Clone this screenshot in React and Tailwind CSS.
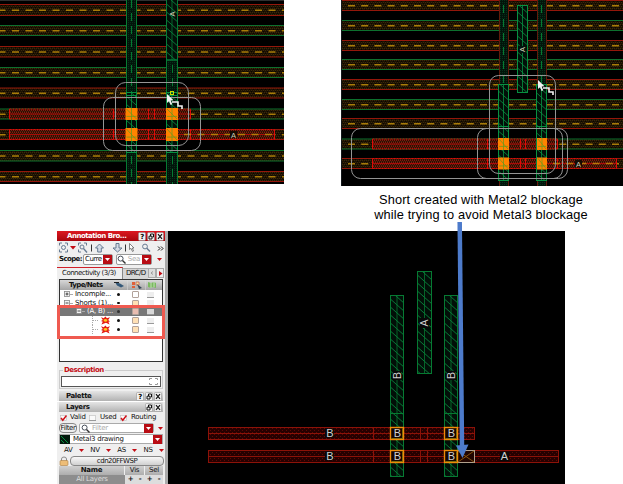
import React from "react";

const GREEN = "#067a32";
const RED = "#8c1208";

function Defs() {
  return (
    <svg className="absolute h-0 w-0">
      <defs>
        <pattern id="brown" width="4" height="4" patternUnits="userSpaceOnUse">
          <rect width="4" height="4" fill="#1c1203" />
          <path d="M0 0h1v1h-1zM2 0h1v1h-1zM1 2h1v1h-1zM3 2h1v1h-1z" fill="#3b2808" />
          <path d="M1 1h1v1h-1zM3 3h1v1h-1z" fill="#0a0600" />
        </pattern>
        <pattern id="red" width="4" height="4" patternUnits="userSpaceOnUse">
          <rect width="4" height="4" fill="#2a1004" />
          <path d="M0 0h1v1h-1zM2 0h1v1h-1zM1 2h1v1h-1zM3 2h1v1h-1z" fill="#8a160b" />
          <path d="M1 1h1v1h-1zM3 1h1v1h-1zM0 3h1v1h-1zM2 3h1v1h-1z" fill="#55200a" />
        </pattern>
        <pattern id="darkred" width="4" height="4" patternUnits="userSpaceOnUse">
          <rect width="4" height="4" fill="#260000" />
          <rect width="1" height="1" fill="#5c0a04" />
          <rect x="2" y="2" width="1" height="1" fill="#5c0a04" />
        </pattern>
        <pattern id="green" width="2" height="2" patternUnits="userSpaceOnUse">
          <rect width="2" height="2" fill="#02140a" />
          <rect width="1" height="1" fill="#06301a" />
        </pattern>
        <pattern id="hatch" width="9" height="8" patternUnits="userSpaceOnUse">
          <path d="M-9 -8L18 16M-9 0L9 16M0 -8L18 8" stroke="#079041" strokeWidth="0.8" />
        </pattern>
      </defs>
    </svg>
  );
}

function Tracks({ rows, x, width, dash, offset }) {
  return rows.map(([top, bottom, color], i) => (
    <g key={i}>
      <rect x={x} y={top} width={width} height={bottom - top} fill="url(#brown)" />
      <path d={`M${x} ${top}H${x + width}M${x} ${bottom}H${x + width}`} stroke={color === "r" ? "#94170b" : "#0d702e"} />
      <path
        d={`M${x} ${(top + bottom) / 2 + 0.2}H${x + width}`}
        stroke="#a87c08"
        strokeWidth="1.5"
        strokeDasharray={dash}
        strokeDashoffset={offset}
      />
    </g>
  ));
}

function Wire({ x1, x2, y1, y2, ticks }) {
  return (
    <g stroke="#dd0c08">
      <rect x={x1} y={y1} width={x2 - x1} height={y2 - y1} fill="url(#red)" stroke="none" />
      <path d={`M${x1} ${y1}H${x2}M${x1} ${y2}H${x2}`} strokeDasharray="2 1" />
      <path d={`M${x1} ${(y1 + y2) / 2}H${x2}`} stroke="#a80c08" />
      <path d={`M${x1} ${y1}V${y2}M${x2} ${y1}V${y2}` + ticks.map((t) => `M${t} ${y1}V${y2}`).join("")} />
    </g>
  );
}

function Hatched({ x, y, w, h, color = "#079041" }) {
  return (
    <g stroke={color}>
      <rect x={x} y={y} width={w} height={h} fill="#020f08" />
      <rect x={x} y={y} width={w} height={h} fill="url(#hatch)" />
      <path d={`M${x + w / 2} ${y}v${h}`} strokeWidth="0.8" />
    </g>
  );
}

function Via({ x, y, w = 12, h = 12 }) {
  return (
    <g>
      <rect x={x} y={y} width={w} height={h} fill="#ff8400" />
      <path d={`M${x + 1} ${y + 1}l${w - 2} ${h - 2}M${x + w / 2} ${y}v${h}M${x + 1} ${y + h * 0.7}h${w - 2}`} stroke="#5c9b20" strokeWidth="0.7" fill="none" />
    </g>
  );
}

function Cursor({ x, y }) {
  return (
    <g transform={`translate(${x} ${y})`}>
      <path d="M0 0L0 9L2 7.2L3.6 11L5.2 10.2L3.7 6.6L6.5 6.3Z" fill="#f2f2f2" />
      <path d="M5 8H11V12H15V15" stroke="#f2f2f2" strokeWidth="1.6" fill="none" />
    </g>
  );
}

function Letter({ x, y, size = 7.5, rotate = 0, fill = "#cfcab4", children }) {
  return (
    <g transform={`translate(${x} ${y}) rotate(${rotate})`}>
      <text className="font-['Liberation_Sans',sans-serif]" textAnchor="middle" y={size * 0.36} fontSize={size} fill={fill}>
        {children}
      </text>
    </g>
  );
}

const leftRows = [
  [4.5, 15.5, "r"], [25.5, 35.5, "g"], [46.5, 57, "r"], [67.5, 77.5, "g"], [88, 98, "r"],
  [109, 119, "g"], [129.5, 139.5, "r"], [150.5, 161, "g"], [171.5, 181.5, "r"],
];

function LeftLayout() {
  return (
    <svg width="284" height="184" className="block shrink-0 bg-black">
      <path d="M0 0.5H284" stroke="#303030" />
      <Tracks rows={leftRows} x={0} width={284} dash="7 6.5" offset="1.5" />
      <Wire x1={9.5} x2={190.5} y1={109} y2={119} ticks={[113.5, 148.5, 154.5]} />
      <Wire x1={9.5} x2={274.5} y1={129.5} y2={139.5} ticks={[113.5, 148.5, 154.5, 190.5]} />
      <path d="M184 134.5H275" stroke="#b87a08" strokeWidth="1.4" strokeDasharray="7 6.5" />
      <g stroke={GREEN}>
        <rect x="126.5" y="-1" width="10" height="186" fill="url(#green)" />
        <path d="M131.5 0V184" strokeDasharray="8 5" />
        <rect x="166.5" y="-1" width="11" height="186" fill="url(#green)" />
        <path d="M172.5 0V184" strokeDasharray="8 5" />
      </g>
      <Hatched x={166.5} y={-1} w={11} h={61} color="#067a38" />
      <Hatched x={126.5} y={92.5} w={10} h={60} />
      <Hatched x={166.5} y={92.5} w={11} h={60} />
      <path d="M126 95.5H137M166 95.5H178" stroke="#079041" />
      <Via x={125.5} y={108} />
      <Via x={125.5} y={128} h={13} />
      <Via x={166} y={108} />
      <Via x={166} y={128} h={13} />
      <g fill="none" stroke="#969696">
        <rect x="115.5" y="82.5" width="73" height="63" rx="10" />
        <rect x="103.5" y="97.5" width="97" height="53" rx="9" />
      </g>
      <Letter x={172} y={14} rotate={-90}>A</Letter>
      <rect x="230" y="131" width="7" height="7" fill="#160b02" />
      <Letter x={233.5} y={135}>A</Letter>
      <rect x="170.5" y="91.5" width="3" height="3" fill="none" stroke="#c8d800" />
      <Cursor x={167} y={94} />
    </svg>
  );
}

const rightRows = [
  [0.5, 10.5, "r"], [20.5, 30.5, "g"], [40.5, 50.5, "r"], [59.5, 69.5, "g"], [79.5, 89.5, "r"],
  [99.5, 109.5, "g"], [118.5, 128.5, "r"], [139, 149, "g"], [158.5, 168.5, "r"],
];

function RightLayout() {
  return (
    <svg width="282" height="186" viewBox="341 0 282 186" className="block shrink-0 bg-black">
      <Tracks rows={rightRows} x={341} width={282} dash="7 6.2" offset="6.2" />
      <Wire x1={372.5} x2={557.5} y1={139} y2={149} ticks={[487.5, 520.5, 525.5]} />
      <Wire x1={372.5} x2={616.5} y1={158.5} y2={168.5} ticks={[487.5, 520.5, 525.5, 557.5]} />
      <path d="M553 163.5H616" stroke="#b87a08" strokeWidth="1.4" strokeDasharray="7 6.2" />
      <g stroke="#611b0b">
        <rect x="499.5" y="-1" width="9" height="188" fill="url(#green)" />
        <rect x="537.5" y="-1" width="9" height="188" fill="url(#green)" />
      </g>
      <path d="M503.5 5V85M541.5 5V85" stroke={GREEN} strokeDasharray="8 6" />
      <Hatched x={517.5} y={5.5} w={10} h={87} />
      <Hatched x={498.5} y={84.5} w={10} h={96} />
      <Hatched x={536.5} y={84.5} w={10} h={96} />
      <path d="M498 126.5H509M536 126.5H547" stroke="#079041" />
      <Via x={498} y={138} w={11} />
      <Via x={498} y={157.5} w={11} />
      <Via x={537} y={138} w={10} />
      <Via x={537} y={157.5} w={10} />
      <g fill="none" stroke="#949494">
        <rect x="489.5" y="75.5" width="66" height="98" rx="9" />
        <rect x="351.5" y="128.5" width="211" height="50" rx="9" />
        <rect x="477.5" y="128.5" width="90" height="50" rx="9" />
      </g>
      <rect x="519" y="46" width="7" height="7" fill="#02120a" />
      <Letter x={522.5} y={49.5} rotate={-90}>A</Letter>
      <rect x="575" y="160" width="7" height="7" fill="#160b02" />
      <Letter x={578.5} y={164}>A</Letter>
      <Cursor x={538} y={80} />
      <path d="M341.5 0V186" stroke="#14181c" />
    </svg>
  );
}

function DarkWire({ x1, x2, y1, y2, ticks }) {
  return (
    <g stroke={RED}>
      <rect x={x1} y={y1} width={x2 - x1} height={y2 - y1} fill="url(#darkred)" />
      <path d={`M${x1} ${(y1 + y2) / 2}H${x2}` + ticks.map((t) => `M${t} ${y1}V${y2}`).join("")} />
    </g>
  );
}

function ResultLayout() {
  const vias = [[390.5, 427.5], [390.5, 450.5], [444.5, 427.5], [444.5, 450.5]];
  return (
    <svg width="397" height="253" viewBox="168 231 397 253" className="block shrink-0 bg-black">
      <DarkWire x1={208.5} x2={474.5} y1={427.5} y2={439.5} ticks={[373.5, 420.5, 427.5]} />
      <DarkWire x1={208.5} x2={558.5} y1={450.5} y2={462.5} ticks={[373.5, 420.5, 427.5]} />
      <Hatched x={417.5} y={271.5} w={14} h={102} color={GREEN} />
      <Hatched x={390.5} y={295.5} w={13} h={181} color={GREEN} />
      <Hatched x={444.5} y={295.5} w={13} h={181} color={GREEN} />
      <path d="M390 413.5H404M444 413.5H458" stroke={GREEN} />
      <rect x="457.5" y="450.5" width="17" height="12" fill="#200500" stroke="#b0a08c" />
      <path d="M458 451L474 462M458 462L474 451" stroke="#86510d" />
      {vias.map(([x, y]) => (
        <g key={x + y * 1000}>
          <rect x={x} y={y} width="13" height="12" fill="#160500" stroke="#f08a08" strokeWidth="1.4" />
          <path d={`M${x + 1} ${y + 11}H${x + 12}V${y + 1}`} fill="none" stroke="#b0a010" strokeWidth="0.6" />
          <Letter x={x + 6.8} y={y + 6} size={11} fill="#d0d0d0">B</Letter>
        </g>
      ))}
      <g fill="#080808">
        <rect x="420" y="318" width="9" height="10" />
        <rect x="393" y="371" width="8" height="9" />
        <rect x="447" y="371" width="8" height="9" />
        <rect x="325" y="428.5" width="9" height="9" />
        <rect x="325" y="451.5" width="9" height="9" />
        <rect x="500" y="452" width="9" height="9" />
      </g>
      <Letter x={424.5} y={323} size={10.5} rotate={-90} fill="#d0d0d0">A</Letter>
      <Letter x={397} y={375.5} size={10.5} rotate={-90} fill="#d0d0d0">B</Letter>
      <Letter x={451} y={375.5} size={10.5} rotate={-90} fill="#d0d0d0">B</Letter>
      <Letter x={330} y={433.5} size={11} fill="#d0d0d0">B</Letter>
      <Letter x={330} y={456.5} size={11} fill="#d0d0d0">B</Letter>
      <Letter x={504.5} y={456.5} size={11} fill="#d0d0d0">A</Letter>
    </svg>
  );
}

function Tri({ color = "#c40d15", right = false }) {
  return (
    <svg width="5" height="5" className="shrink-0">
      <path d={right ? "M1 0L4.5 2.5L1 5Z" : "M0 1H5L2.5 4Z"} fill={color} />
    </svg>
  );
}

function RedDrop() {
  return (
    <div className="flex h-[9px] w-[9px] shrink-0 items-center justify-center bg-[#b80c14]">
      <Tri color="#fff" />
    </div>
  );
}

function WinButtons({ help = true }) {
  return (
    <svg width="27" height="9" className="shrink-0">
      {help && (
        <g>
          <rect x="0.5" y="0.5" width="7" height="8" rx="1" fill="#f0f0f0" stroke="#888" strokeWidth="0.5" />
          <text x="4" y="7.2" fontSize="7" fontWeight="bold" textAnchor="middle" className="font-['DejaVu_Sans',sans-serif]">?</text>
        </g>
      )}
      <rect x="9.5" y="0.5" width="7" height="8" rx="1" fill="#f0f0f0" stroke="#888" strokeWidth="0.5" />
      <path d="M12.5 4V2H15.5V5H14.5M11 4.2H14V7H11Z" fill="none" stroke="#111" />
      <rect x="18.5" y="0.5" width="7" height="8" rx="1" fill="#f0f0f0" stroke="#888" strokeWidth="0.5" />
      <path d="M20 2.2L24 6.8M24 2.2L20 6.8" stroke="#111" strokeWidth="1.2" />
    </svg>
  );
}

function Search() {
  return (
    <svg width="9" height="9" className="shrink-0">
      <circle cx="3.6" cy="3.6" r="2.5" fill="none" stroke="#48505c" />
      <path d="M5.5 5.5L8.5 8.5" stroke="#333" strokeWidth="1.4" />
    </svg>
  );
}

function Toolbar() {
  return (
    <svg width="108" height="13" viewBox="57 239.5 108 13" className="block shrink-0" fill="none">
      <g stroke="#667a91">
        <path d="M59.5 244V241.5H62M65 241.5H67.5V244M67.5 248V250.5H65M62 250.5H59.5V248" />
        <circle cx="63.5" cy="246" r="2" />
        <path d="M78.5 244V241.5H81M84 241.5H86.5V244M81 250.5H78.5V248" />
        <circle cx="82" cy="245.5" r="2" />
        <path d="M83.5 247L87 251" strokeWidth="1.4" />
        <path d="M95.5 246.5L99.5 242.5L103.5 246.5H101.3V250.5H97.7V246.5Z" fill="#d5dce6" />
        <path d="M113 246.5L117.5 250.5L122 246.5H119V242H116V246.5Z" fill="#d5dce6" />
        <circle cx="145" cy="245" r="2.4" />
        <path d="M146.8 246.8L150 250" strokeWidth="1.4" />
      </g>
      <path d="M70 244.5H76L73 248Z" fill="#c40d15" />
      <path d="M91.5 243V250M125.5 243V250" stroke="#333" />
      <path d="M129.5 242V248L131 246.8L132.5 250L133.5 249.5L132.3 246.5H134Z" stroke="#666" strokeWidth="0.8" fill="#fff" />
      <path d="M158 245L160 247L158 249M161 245L163 247L161 249" stroke="#111" />
    </svg>
  );
}

function Star() {
  return (
    <svg width="9" height="9" viewBox="0 0 10 9" className="shrink-0">
      <path d="M0 1L3 2L5 0L6.5 2L10 1L8 4L10 5.5L8.2 6L9.5 9L5.5 7L0.5 9L2 6L0 5L2 4Z" fill="#e51b10" />
      <path d="M3 3.5L5 2.8L7 3.5V5.2L5 6L3 5.2Z" fill="#ffca20" />
    </svg>
  );
}

function Cells({ first = "bg-[#ffe0b5]", dark = false }) {
  return (
    <div className="ml-auto flex w-[45px] shrink-0 items-center">
      <span className={"mr-[12px] h-[2.5px] w-[2.5px] shrink-0 rounded-full " + (dark ? "bg-[#333]" : "bg-[#111]")} />
      <span className={"mr-[8px] h-[7px] w-[7px] shrink-0 rounded-[1px] border border-[#b2a29a] " + first} />
      <span className={"h-[6px] w-[7px] shrink-0 border-b border-[#999] " + (dark ? "bg-[#d7d7d7]" : "bg-[#eee]")} />
    </div>
  );
}

function Expander({ plus }) {
  return (
    <svg width="11" height="7" className="shrink-0">
      <rect x="0.5" y="0.5" width="5" height="5" fill="#f4f4f4" stroke="#888" strokeWidth="0.8" />
      <path d={plus ? "M1.5 3H4.5M3 1.5V4.5" : "M1.5 3H4.5"} stroke="#222" strokeWidth="0.8" />
      <path d="M6 3.5H9" stroke="#aaa" />
    </svg>
  );
}

function Tree() {
  return (
    <div className="mx-[2px] h-[83px] shrink-0 border border-[#333] bg-white">
      <div className="flex h-[10px] items-center bg-gradient-to-b from-[#d8d8d8] to-[#a5a5a5]">
        <span className="w-[51px] shrink-0 whitespace-nowrap pl-[9px] font-bold tracking-[-0.6px]">Type/Nets</span>
        <svg width="50" height="10" viewBox="110 280 50 10" className="shrink-0">
          <path d="M114 282L119 283.5L123 286L120 287.5L116 285.5Z" fill="#345878" />
          <path d="M113 282.5H118" stroke="#222" />
          <path d="M131 282h3v3h-3zM131 286h3v2h-3z" fill="#e06038" />
          <path d="M135 282h3v3h-3z" fill="#f8e0a0" stroke="#bf4434" strokeWidth="0.6" />
          <path d="M136 284L141 288L138 289Z" fill="#345" />
          <path d="M147 282L150 283L153 282L155 283V288L152 287L150 288L147 287Z" fill="#7ab960" />
          <path d="M150 283V288M153 282V287" stroke="#e5f4dc" strokeWidth="0.7" />
          <path d="M126.5 280V290M144.5 280V290" stroke="#ddd" strokeWidth="0.5" />
        </svg>
      </div>
      <div className="flex h-[9px] items-center pl-[4px]">
        <Expander plus />
        <span className="whitespace-nowrap">Incomple...</span>
        <Cells first="bg-white" />
      </div>
      <div className="flex h-[8px] items-center pl-[4px]">
        <Expander />
        <span className="whitespace-nowrap leading-[8px]">Shorts (1)...</span>
        <Cells />
      </div>
      <div className="flex h-[9px] items-center bg-[#777] pl-[16px] text-white">
        <Expander />
        <span className="whitespace-nowrap">(A, B) ...</span>
        <Cells first="bg-[#e9bdb0]" dark />
      </div>
      {[0, 1].map((i) => (
        <div key={i} className="flex h-[9px] items-center pl-[32px]">
          <span className="mr-[3px] h-[9px] w-[6px] shrink-0 border-l border-dotted border-[#aaa]">
            <span className="block h-[5px] border-b border-dotted border-[#aaa]" />
          </span>
          <Star />
          <Cells />
        </div>
      ))}
    </div>
  );
}

function Check({ on }) {
  return (
    <svg width="7" height="8" className="shrink-0">
      <rect x="0.5" y="1.5" width="6" height="5" fill="#fafafa" stroke="#bbb" strokeWidth="0.6" />
      {on ? <path d="M1 4L2.8 6.3L6.5 1.5" fill="none" stroke="#d01018" strokeWidth="1.5" /> : <path d="M0 6.5H7" stroke="#999" />}
    </svg>
  );
}

function SectionBar({ title, help }) {
  return (
    <div className="mx-[2px] flex h-[10px] shrink-0 items-center justify-between bg-gradient-to-b from-[#e5e5e5] to-[#b2b2b2] pl-[7px] font-bold tracking-[-0.4px]">
      <span>{title}</span>
      <WinButtons help={help} />
    </div>
  );
}

function Browser() {
  return (
    <div className="flex h-[253px] w-[111px] shrink-0 flex-col border-r-[3px] border-[#aaa] bg-[#efefef] font-['DejaVu_Sans',sans-serif] text-[7px] leading-[9px] tracking-[-0.25px] text-[#111]">
      <div className="flex h-[10px] shrink-0 items-center justify-between bg-gradient-to-b from-[#dc1820] to-[#a9060d] pl-[10px] font-bold tracking-[-0.5px] text-white">
        <span className="whitespace-nowrap">Annotation Bro...</span>
        <WinButtons />
      </div>
      <Toolbar />
      <div className="flex h-[11px] shrink-0 items-center pl-[2px]">
        <span className="w-[24px] shrink-0 font-bold tracking-[-0.6px]">Scope:</span>
        <div className="flex h-[11px] w-[30px] shrink-0 items-center justify-between rounded-[2px] border border-[#999] bg-white pl-px">
          <span className="tracking-[-0.5px]">Curre</span>
          <RedDrop />
        </div>
        <div className="ml-[3px] flex h-[11px] w-[36px] shrink-0 items-center justify-between rounded-[2px] border border-[#999] bg-white">
          <Search />
          <span className="text-[#aaa]">Sea</span>
          <RedDrop />
        </div>
        <span className="ml-[5px] flex"><Tri /></span>
      </div>
      <div className="mt-[2px] flex h-[12px] shrink-0 items-center">
        <div className="flex h-[12px] w-[66px] shrink-0 items-center whitespace-nowrap border-r border-t border-r-[#888] border-t-[#d02028] pl-[5px] tracking-[-0.5px]">Connectivity (3/3)</div>
        <div className="flex h-[11px] w-[25px] shrink-0 items-center whitespace-nowrap border-t border-[#aaa] bg-[#d6d6d6] pl-[3px] tracking-[-0.6px]">DRC/D</div>
        <div className="flex h-[10px] w-[8px] shrink-0 items-center justify-center border border-[#aaa] bg-[#ddd]">
          <svg width="4" height="4"><path d="M3 0.5L1 2L3 3.5" fill="none" stroke="#999" /></svg>
        </div>
        <div className="flex h-[10px] w-[8px] shrink-0 items-center justify-center border border-[#aaa] bg-[#eee]"><Tri right /></div>
      </div>
      <Tree />
      <div className="relative mx-[2px] mt-[8px] h-[19px] shrink-0 border border-[#ccc] pt-[5px]">
        <span className="absolute left-[3px] top-[-5px] bg-[#efefef] px-px font-bold tracking-[-0.5px] text-[#c40d15]">Description</span>
        <div className="mx-px flex h-[11px] items-center justify-end border border-[#555] bg-white pr-[2px]">
          <svg width="9" height="7" fill="none" stroke="#999">
            <path d="M0.5 2V0.5H3M6 0.5H8.5V2M8.5 5V6.5H6M3 6.5H0.5V5" />
          </svg>
        </div>
      </div>
      <div className="h-[2px] shrink-0" />
      <SectionBar title="Palette" help />
      <div className="h-px shrink-0 bg-white" />
      <SectionBar title="Layers" help={false} />
      <div className="flex h-[11px] shrink-0 items-center pl-[3px]">
        <Check on /><span className="w-[22px] pl-[3px]">Valid</span>
        <Check /><span className="w-[24px] pl-[4px]">Used</span>
        <Check on /><span className="pl-[4px]">Routing</span>
      </div>
      <div className="flex h-[10px] shrink-0 items-center pl-[2px]">
        <span className="flex h-[10px] w-[18px] shrink-0 items-center justify-center rounded-[4px] border border-[#888] bg-[#eee] tracking-[-0.4px]">Filter</span>
        <div className="ml-[2px] flex h-[10px] w-[75px] shrink-0 items-center rounded-[2px] border border-[#aaa] bg-white pl-px">
          <Search />
          <span className="grow pl-[2px] text-[#aaa]">Filter</span>
          <RedDrop />
        </div>
        <span className="ml-[4px] flex"><Tri /></span>
      </div>
      <div className="mx-[2px] mt-px flex h-[10px] shrink-0 items-center border border-[#aaa] bg-white">
        <svg width="10" height="9"><rect width="10" height="9" fill="#03190d" /><path d="M1 1L8 8M1 5L4 8" stroke="#079041" /></svg>
        <span className="grow pl-[3px]">Metal3 drawing</span>
        <RedDrop />
      </div>
      <div className="flex h-[12px] shrink-0 items-center justify-between pl-[7px] pr-px">
        <span>AV</span><Tri /><span>NV</span><Tri /><span>AS</span><Tri /><span>NS</span><Tri />
      </div>
      <div className="flex h-[10px] shrink-0 items-center pl-[2px]">
        <svg width="10" height="10" className="shrink-0">
          <path d="M2.5 5V3A2.5 2 0 0 1 7.5 3V5" fill="none" stroke="#8b8b8b" />
          <rect x="1" y="4.5" width="8" height="5" rx="1" fill="#edbd77" stroke="#a97c40" strokeWidth="0.6" />
        </svg>
        <div className="ml-px flex h-[10px] w-[94px] shrink-0 items-center justify-center rounded-[4px] border border-[#888] bg-gradient-to-b from-[#f8f8f8] to-[#d0d0d0] tracking-[-0.5px]">cdn20FFWSP</div>
      </div>
      <div className="mx-[2px] flex h-[9px] shrink-0 items-center bg-gradient-to-b from-[#d0d0d0] to-[#adadad]">
        <span className="w-[66px] border-r border-[#eee] text-center font-bold">Name</span>
        <span className="w-[20px] border-r border-[#eee] text-center">Vis</span>
        <span className="w-[18px] text-center">Sel</span>
      </div>
      <div className="mx-[2px] flex h-[9px] shrink-0 items-center">
        <span className="h-[9px] w-[66px] shrink-0 bg-[#8d8d8d] text-center text-[#ddd]">All Layers</span>
        <span className="flex grow justify-around bg-[#ddd] font-bold">
          <span>+</span><span>-</span><span>+</span><span>-</span>
        </span>
      </div>
    </div>
  );
}

export default function App() {
  return (
    <div className="relative flex h-[484px] w-[623px] flex-col overflow-hidden bg-white">
      <Defs />
      <div className="flex h-[186px] shrink-0 items-start justify-between">
        <LeftLayout />
        <RightLayout />
      </div>
      <p className="ml-[341px] h-[45px] w-[280px] shrink-0 whitespace-nowrap pt-[6px] text-center font-['Liberation_Sans',Arial,sans-serif] text-[12.8px] leading-[15px] tracking-[0.12px] text-black">
        Short created with Metal2 blockage
        <br />
        while trying to avoid Metal3 blockage
      </p>
      <div className="ml-[57px] flex h-[253px] shrink-0">
        <Browser />
        <ResultLayout />
      </div>
      <div className="absolute left-[57px] top-[305px] h-[34px] w-[108px] border-[3px] border-[#ef5a50]" />
      <svg width="14" height="240" viewBox="455 220 14 240" className="absolute left-[455px] top-[220px]">
        <path d="M459.7 222L462 447" stroke="#4d7bcb" strokeWidth="4.5" />
        <path d="M456 445.5L468.5 444.5L462.5 458Z" fill="#4d7bcb" />
      </svg>
    </div>
  );
}
